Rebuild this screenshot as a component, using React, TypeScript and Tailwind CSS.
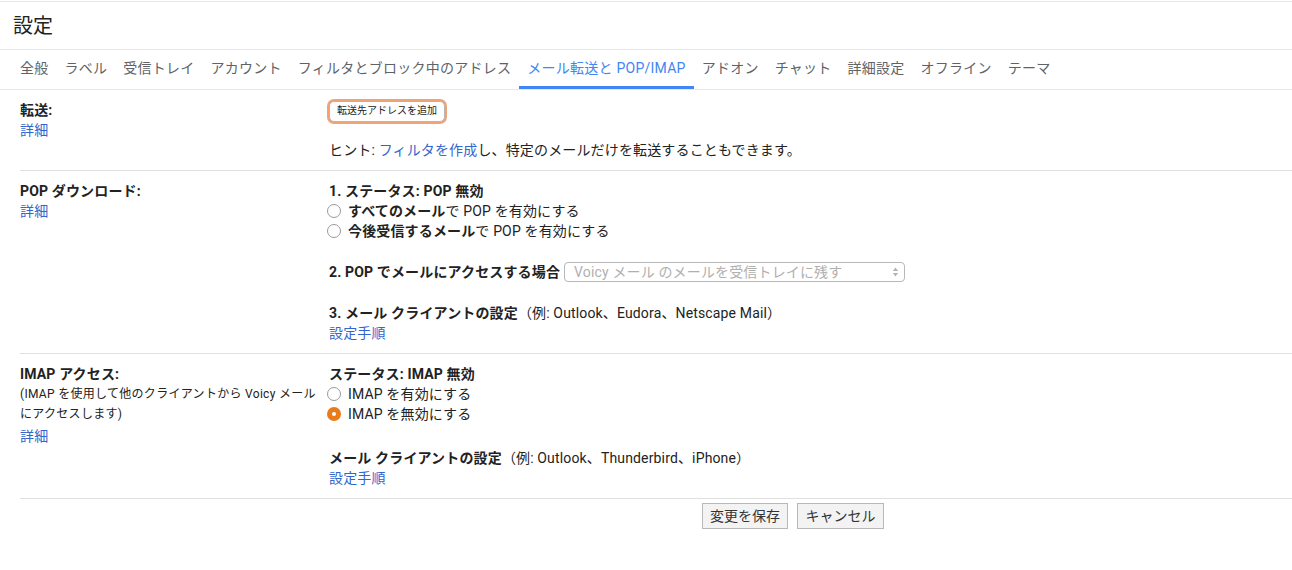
import React from "react";

const font = { fontFamily: '"Roboto", "Noto Sans CJK JP", sans-serif' };

function Radio({ checked }: { checked?: boolean }) {
  return checked ? (
    <span className="inline-flex w-[14px] h-[14px] rounded-full bg-[#ea7b1c] items-center justify-center mr-[7px] -ml-[1px] shrink-0">
      <span className="w-[4px] h-[4px] rounded-full bg-white" />
    </span>
  ) : (
    <span className="inline-block w-[14px] h-[14px] rounded-full border border-[#9a9a9a] bg-white mr-[7px] -ml-[1px] shrink-0" />
  );
}

const tabs = [
  "全般",
  "ラベル",
  "受信トレイ",
  "アカウント",
  "フィルタとブロック中のアドレス",
  "メール転送と POP/IMAP",
  "アドオン",
  "チャット",
  "詳細設定",
  "オフライン",
  "テーマ",
];

const link = "text-[#3366cc]";

export default function App() {
  return (
    <div className="w-[1292px] h-[570px] bg-white text-[#222] overflow-hidden pt-px" style={font}>
      <div className="border-t border-[#e8e8e8] h-[48px] flex items-center pl-[13px] text-[20px] text-[#222]">
        設定
      </div>
      <div className="border-t border-b border-[#e8e8e8] h-[41px] flex items-stretch pl-[12px] text-[14px] tracking-[0.25px]">
        {tabs.map((t) => {
          const active = t === "メール転送と POP/IMAP";
          return (
            <div
              key={t}
              className={
                "px-[8px] pt-[1px] flex items-center border-b-[3px] " +
                (active ? "border-[#4285f4] text-[#4285f4]" : "border-transparent text-[#5f6368]")
              }
            >
              {t}
            </div>
          );
        })}
      </div>

      <div className="ml-[20px] text-[14px] leading-[20px] tracking-[0.15px]">
        {/* 転送 */}
        <div className="flex border-b border-[#e0e0e0] pt-[10px] pb-[10px]">
          <div className="w-[308px]">
            <div className="font-bold">転送:</div>
            <div className={link}>詳細</div>
          </div>
          <div>
            <div className="h-[22px] flex items-center">
              <button className="h-[21px] px-[7px] rounded-[5px] bg-white border border-[#b5b5b5] text-[10px] leading-[14px] tracking-normal text-[#222] shadow-[0_0_0_2px_#f0a476] ml-[1px]">
                転送先アドレスを追加
              </button>
            </div>
            <div className="mt-[18px] pl-[1px]">
              ヒント: <span className={link}>フィルタを作成</span>し、特定のメールだけを転送することもできます。
            </div>
          </div>
        </div>

        {/* POP */}
        <div className="flex border-b border-[#e0e0e0] pt-[10px] pb-[10px]">
          <div className="w-[308px]">
            <div className="font-bold">POP ダウンロード:</div>
            <div className={link}>詳細</div>
          </div>
          <div>
            <div className="font-bold pl-[1px]">1. ステータス: POP 無効</div>
            <div className="flex items-center h-[20px]">
              <Radio />
              <span>
                <b>すべてのメール</b>で POP を有効にする
              </span>
            </div>
            <div className="flex items-center h-[20px]">
              <Radio />
              <span>
                <b>今後受信するメール</b>で POP を有効にする
              </span>
            </div>
            <div className="flex items-center mt-[21px] h-[20px] pl-[1px]">
              <span className="font-bold">2. POP でメールにアクセスする場合</span>
              <div className="ml-[4px] w-[341px] h-[20px] border border-[#b8b8b8] rounded-[4px] flex items-center justify-between pl-[9px] pr-[5px] text-[#b0b0b0]">
                <span>Voicy メール のメールを受信トレイに残す</span>
                <svg width="7" height="12" viewBox="0 0 7 12">
                  <path d="M1 5 L3.5 1.5 L6 5 Z" fill="#b0b0b0" />
                  <path d="M1 7 L3.5 10.5 L6 7 Z" fill="#b0b0b0" />
                </svg>
              </div>
            </div>
            <div className="mt-[21px] pl-[1px]">
              <b>3. メール クライアントの設定</b>（例: Outlook、Eudora、Netscape Mail）
            </div>
            <div className={link + " pl-[1px]"}>設定手順</div>
          </div>
        </div>

        {/* IMAP */}
        <div className="flex border-b border-[#e0e0e0] pt-[10px] pb-[10px]">
          <div className="w-[308px]">
            <div className="font-bold">IMAP アクセス:</div>
            <div className="text-[12px] tracking-[0.3px]">(IMAP を使用して他のクライアントから Voicy メール</div>
            <div className="text-[12px] tracking-[0.3px]">にアクセスします)</div>
            <div className={link + " mt-[2px]"}>詳細</div>
          </div>
          <div>
            <div className="font-bold pl-[1px]">ステータス: IMAP 無効</div>
            <div className="flex items-center h-[20px]">
              <Radio />
              <span>IMAP を有効にする</span>
            </div>
            <div className="flex items-center h-[20px]">
              <Radio checked />
              <span>IMAP を無効にする</span>
            </div>
            <div className="mt-[24px] pl-[1px]">
              <b>メール クライアントの設定</b>（例: Outlook、Thunderbird、iPhone）
            </div>
            <div className={link + " pl-[1px]"}>設定手順</div>
          </div>
        </div>
      </div>

      <div className="flex gap-[9px] pl-[702px] pt-[4px] text-[14px]">
        <button className="h-[26px] w-[86px] border border-[#b8b8b8] bg-[#f3f3f3] text-[#333]">変更を保存</button>
        <button className="h-[26px] w-[87px] border border-[#b8b8b8] bg-[#f3f3f3] text-[#333]">キャンセル</button>
      </div>
    </div>
  );
}
